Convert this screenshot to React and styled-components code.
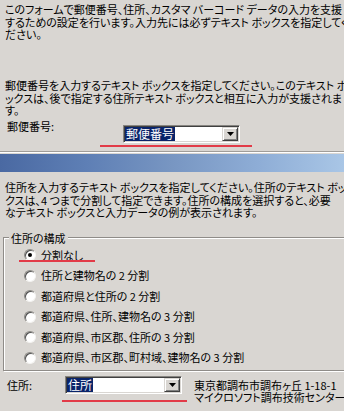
import React from "react";
import styled, { createGlobalStyle } from "styled-components";

const FACE = "#d9d6d2";

const Global = createGlobalStyle`
  html, body { margin: 0; padding: 0; background: ${FACE}; }
  body { font-family: "Noto Sans CJK JP", "Noto Sans", sans-serif; font-size: 11px; color: #000; }
`;

const Page = styled.div`
  display: flow-root;
  width: 344px;
  height: 411px;
  overflow: hidden;
  background: ${FACE};
  color: #000;
  font-family: "Noto Sans CJK JP", "Noto Sans", sans-serif;
  font-size: 11px;
  line-height: 12.5px;
  font-feature-settings: "palt";
`;

const Para = styled.p`
  margin: ${(p) => p.$top}px 0 0 5px;
  white-space: nowrap;
  line-height: 12.5px;
`;

const FieldRow = styled.div`
  display: flex;
  align-items: flex-start;
  margin-top: ${(p) => p.$top}px;
`;

const FieldLabel = styled.span`
  flex: 0 0 auto;
  box-sizing: border-box;
  width: ${(p) => p.$w}px;
  padding-left: 7px;
  margin-top: ${(p) => p.$dy}px;
  white-space: nowrap;
`;

const ComboColumn = styled.div`
  flex: 0 0 auto;
  display: flex;
  flex-direction: column;
  margin-top: ${(p) => p.$dy}px;
`;

const Combo = styled.div`
  box-sizing: border-box;
  width: ${(p) => p.$w}px;
  height: 18px;
  padding: 1px;
  display: flex;
  align-items: stretch;
  background: #fff;
  border: 1px solid;
  border-color: #878581 #fff #fff #878581;
  box-shadow: inset 1px 1px 0 #404040, inset -1px -1px 0 ${FACE};
`;

const Selected = styled.span`
  padding: 0 1px;
  background: #0a246a;
  color: #fff;
  font-size: 12px;
  line-height: 14px;
  white-space: nowrap;
`;

const DropButton = styled.div`
  margin-left: auto;
  box-sizing: border-box;
  width: 16px;
  height: 14px;
  display: flex;
  align-items: center;
  justify-content: center;
  background: ${FACE};
  border: 1px solid;
  border-color: ${FACE} #404040 #404040 ${FACE};
  box-shadow: inset 1px 1px 0 #fff, inset -1px -1px 0 #808080;
`;

const RedMark = styled.div`
  height: 2px;
  background: #e23b48;
  width: ${(p) => p.$w}px;
  margin-left: ${(p) => p.$dx}px;
  margin-top: ${(p) => p.$dy}px;
`;

const OverMark = styled(RedMark)`
  position: absolute;
  left: ${(p) => p.$dx}px;
  top: ${(p) => p.$y}px;
  margin: 0;
`;

const Etch = styled.div`
  margin-top: 4px;
  border-top: 1px solid #a09d99;
  border-bottom: 1px solid #fff;
`;

const Band = styled.div`
  margin-top: 1px;
  height: 18px;
  background: linear-gradient(
    90deg,
    #4a69a2 0%,
    #5e7fb5 25%,
    #7896c2 50%,
    #8eadd6 75%,
    #a9c6e6 100%
  );
`;

const Group = styled.div`
  position: relative;
  margin: 18.5px 0 0 3px;
  width: 400px;
  border: 1px solid #8f8c88;
  box-shadow: inset 1px 1px 0 #fff, 1px 1px 0 #fff;
  padding: 6.75px 0 2.25px 20px;
`;

const Legend = styled.span`
  position: absolute;
  top: -6px;
  left: 5px;
  padding: 0 2px;
  background: ${FACE};
  white-space: nowrap;
`;

const RadioRow = styled.div`
  position: relative;
  height: 20.5px;
  display: flex;
  align-items: center;
  gap: 5px;
  white-space: nowrap;
`;

const RadioCircle = styled.span`
  position: relative;
  flex: 0 0 auto;
  box-sizing: border-box;
  width: 12px;
  height: 12px;
  border-radius: 50%;
  background: #fff;
  border: 1px solid;
  border-color: #8a8884 #f4f3f1 #f4f3f1 #8a8884;
  box-shadow: inset 1px 1px 0 #505050;
  display: flex;
  align-items: center;
  justify-content: center;

  &::after {
    content: "";
    display: ${(p) => (p.$on ? "block" : "none")};
    width: 4px;
    height: 4px;
    border-radius: 50%;
    background: #000;
  }
`;

const Address = styled.div`
  margin: 3px 0 0 7px;
  line-height: 12px;
  white-space: nowrap;
`;

const Arrow = () => (
  <svg width="7" height="4" viewBox="0 0 7 4">
    <polygon points="0,0 7,0 3.5,4" fill="#000" />
  </svg>
);

const options = [
  "分割なし",
  "住所と建物名の 2 分割",
  "都道府県と住所の 2 分割",
  "都道府県、住所、建物名の 3 分割",
  "都道府県、市区郡、住所の 3 分割",
  "都道府県、市区郡、町村域、建物名の 3 分割",
];

export default function App() {
  return (
    <>
      <Global />
      <Page>
        <Para $top={3}>
          このフォームで郵便番号、住所、カスタマ バーコード データの入力を支援
          <br />
          するための設定を行います。入力先には必ずテキスト ボックスを指定してく
          <br />
          ださい。
        </Para>
        <Para $top={38.5}>
          郵便番号を入力するテキスト ボックスを指定してください。このテキスト ボ
          <br />
          ックスは、後で指定する住所テキスト ボックスと相互に入力が支援されま
          <br />
          す。
        </Para>
        <FieldRow $top={3.5}>
          <FieldLabel $w={123} $dy={0}>
            郵便番号:
          </FieldLabel>
          <ComboColumn $dy={5}>
            <Combo $w={117}>
              <Selected>郵便番号</Selected>
              <DropButton>
                <Arrow />
              </DropButton>
            </Combo>
            <RedMark $w={152} $dx={-23} $dy={2} />
          </ComboColumn>
        </FieldRow>
        <Etch />
        <Band />
        <Para $top={9}>
          住所を入力するテキスト ボックスを指定してください。住所のテキスト ボッ
          <br />
          クスは、4 つまで分割して指定できます。住所の構成を選択すると、必要
          <br />
          なテキスト ボックスと入力データの例が表示されます。
        </Para>
        <Group>
          <Legend>住所の構成</Legend>
          {options.map((o, i) => (
            <RadioRow key={o}>
              <RadioCircle $on={i === 0} />
              <span>{o}</span>
              {i === 0 && <OverMark $w={76} $dx={-5} $y={15} />}
            </RadioRow>
          ))}
        </Group>
        <FieldRow $top={5}>
          <FieldLabel $w={65} $dy={3}>
            住所:
          </FieldLabel>
          <ComboColumn $dy={0}>
            <Combo $w={117}>
              <Selected>住所</Selected>
              <DropButton>
                <Arrow />
              </DropButton>
            </Combo>
            <RedMark $w={125} $dx={-3} $dy={6} />
          </ComboColumn>
          <Address>
            東京都調布市調布ヶ丘 1-18-1
            <br />
            マイクロソフト調布技術センター
          </Address>
        </FieldRow>
      </Page>
    </>
  );
}
